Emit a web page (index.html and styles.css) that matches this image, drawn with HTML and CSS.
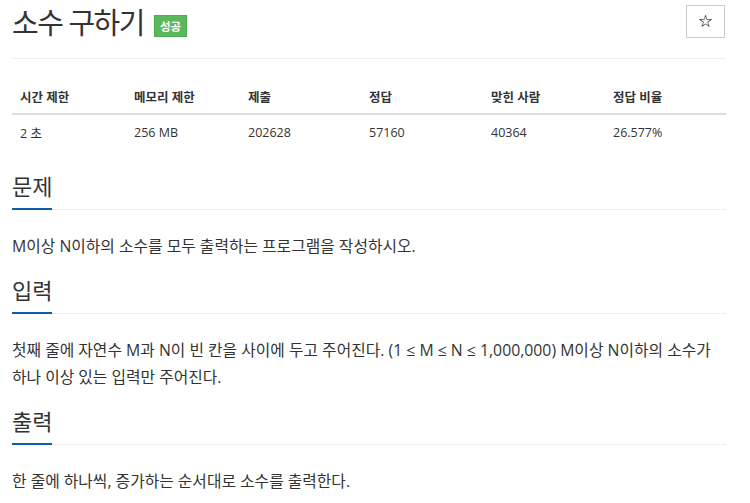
FILE: index.html
```html
<!DOCTYPE html>
<html lang="ko">
<head>
    <meta charset="UTF-8">
    <meta name="viewport" content="width=device-width, initial-scale=1.0">
    <title>소수 구하기</title>
    <link rel="stylesheet" href="styles.css">
</head>
<body>
    <div class="page">
        <div class="title-row">
            <h1 class="problem-title">소수 구하기 <span class="badge">성공</span></h1>
            <button class="star-btn" type="button">&#9734;</button>
        </div>
        <hr class="title-rule">

        <table class="info-table">
            <thead>
                <tr>
                    <th class="col-time">시간 제한</th>
                    <th class="col-mem">메모리 제한</th>
                    <th class="col-submit">제출</th>
                    <th class="col-ac">정답</th>
                    <th class="col-users">맞힌 사람</th>
                    <th>정답 비율</th>
                </tr>
            </thead>
            <tbody>
                <tr>
                    <td>2 초</td>
                    <td>256 MB</td>
                    <td>202628</td>
                    <td>57160</td>
                    <td>40364</td>
                    <td>26.577%</td>
                </tr>
            </tbody>
        </table>

        <section class="problem-section">
            <div class="headline"><h2><span>문제</span></h2></div>
            <p>M이상 N이하의 소수를 모두 출력하는 프로그램을 작성하시오.</p>
        </section>

        <section class="problem-section">
            <div class="headline"><h2><span>입력</span></h2></div>
            <p>첫째 줄에 자연수 M과 N이 빈 칸을 사이에 두고 주어진다. (1 ≤ M ≤ N ≤ 1,000,000) M이상 N이하의 소수가 하나 이상 있는 입력만 주어진다.</p>
        </section>

        <section class="problem-section">
            <div class="headline"><h2><span>출력</span></h2></div>
            <p>한 줄에 하나씩, 증가하는 순서대로 소수를 출력한다.</p>
        </section>
    </div>
</body>
</html>
```

FILE: styles.css
```css
body {
    margin: 0;
    background-color: #fff;
    color: #333;
    font-family: 'Open Sans', 'Noto Sans CJK KR', sans-serif;
}
.page {
    width: 714px;
    padding: 0 12px;
}
.title-row {
    display: flex;
    justify-content: space-between;
    align-items: flex-start;
    height: 58px;
}
.problem-title {
    margin: 6px 0 0 0;
    font-size: 29px;
    font-weight: 400;
    line-height: 34px;
    letter-spacing: -1.5px;
    color: #333;
}
.badge {
    display: inline-block;
    vertical-align: 3px;
    margin-left: 4px;
    padding: 0 5px;
    height: 22px;
    line-height: 21px;
    font-size: 11.5px;
    font-weight: 700;
    letter-spacing: 0;
    color: #fff;
    background-color: #5cb85c;
    border: 1px solid #4cae4c;
    box-sizing: border-box;
}
.star-btn {
    margin-top: 5px;
    margin-right: 1px;
    width: 39px;
    height: 33px;
    background-color: #fff;
    border: 1px solid #ccc;
    font-size: 15px;
    color: #000;
    padding: 0;
    cursor: pointer;
}
.title-rule {
    margin: 0;
    border: none;
    border-top: 1px solid #eee;
}
.info-table {
    width: 100%;
    margin: 20px 0 18px;
    border-collapse: collapse;
    font-size: 12.5px;
    text-align: left;
}
.info-table th,
.info-table td {
    padding: 0 8px;
    height: 34px;
}
.info-table th {
    font-weight: 700;
    border-bottom: 2px solid #ddd;
}
.col-time,
.col-mem {
    width: 98px;
}
.col-submit {
    width: 105px;
}
.col-ac,
.col-users {
    width: 106px;
}
.headline h2 {
    margin: 0;
    border-bottom: 1px dotted #ddd;
    font-size: 22px;
    font-weight: 400;
    line-height: 30px;
}
.headline h2 span {
    display: inline-block;
    border-bottom: 2px solid #0e5fa8;
    margin-bottom: -1px;
    padding: 4px 0 7px;
}
.problem-section p {
    margin: 23px 0 11px 0;
    font-size: 15.8px;
    line-height: 27px;
}
```
